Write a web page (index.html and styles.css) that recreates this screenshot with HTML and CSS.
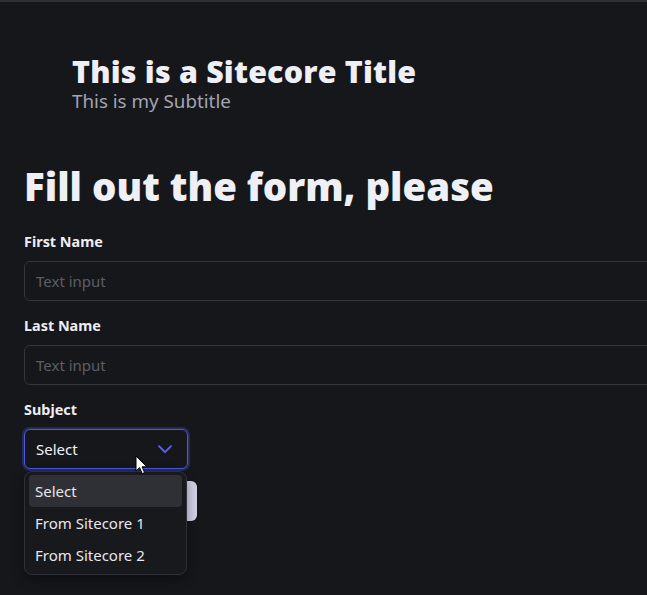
FILE: index.html
```html
<!DOCTYPE html>
<html lang="en">
<head>
<meta charset="utf-8">
<title>Sitecore Form</title>
<link rel="stylesheet" href="styles.css">
</head>
<body>
<div class="page">
  <header class="hero">
    <h1 class="hero-title">This is a Sitecore Title</h1>
    <p class="hero-subtitle">This is my Subtitle</p>
  </header>
  <main class="content">
    <h2 class="form-title">Fill out the form, please</h2>
    <form class="form">
      <div class="field">
        <label class="field-label">First Name</label>
        <div class="text-input"><span class="placeholder">Text input</span></div>
      </div>
      <div class="field">
        <label class="field-label">Last Name</label>
        <div class="text-input"><span class="placeholder">Text input</span></div>
      </div>
      <div class="field">
        <label class="field-label">Subject</label>
        <div class="select-wrap">
          <div class="select">
            <span class="select-value">Select</span>
            <svg class="chevron" width="14" height="9" viewBox="0 0 14 9"><path d="M1 1.2 L7 7.2 L13 1.2" fill="none" stroke="#5b63f0" stroke-width="1.9" stroke-linecap="round" stroke-linejoin="round"/></svg>
          </div>
          <ul class="menu">
            <li class="menu-item active">Select</li>
            <li class="menu-item">From Sitecore 1</li>
            <li class="menu-item">From Sitecore 2</li>
          </ul>
          <svg class="cursor" width="13" height="20" viewBox="0 0 13 20"><path d="M1 1 L1 16 L4.6 12.6 L7.2 18.6 L9.6 17.6 L7 11.8 L11.8 11.8 Z" fill="#ffffff" stroke="#000000" stroke-width="1" stroke-linejoin="miter"/></svg>
        </div>
      </div>
      <div class="actions">
        <button type="button" class="submit">Submit</button>
      </div>
    </form>
  </main>
</div>
</body>
</html>
```
FILE: styles.css
```css
html, body {
  margin: 0;
  padding: 0;
  overflow: hidden;
}
body {
  background: #16171b;
  color: #eceef3;
  font-family: "Noto Sans", "Open Sans", sans-serif;
  height: 595px;
}
.page {
  border-top: 2px solid #2f2f37;
}
.hero {
  padding: 52px 0 0 72px;
}
.hero-title {
  margin: 0;
  font-family: "Open Sans", "Noto Sans", sans-serif;
  font-size: 30.4px;
  line-height: 36px;
  font-weight: 800;
  color: #eef0f6;
  letter-spacing: 0.2px;
}
.hero-subtitle {
  margin: 0;
  font-size: 18.8px;
  line-height: 22px;
  color: #a2a5b1;
}
.content {
  padding: 0 0 0 24px;
}
.form-title {
  margin: 50px 0 0 0;
  font-family: "Open Sans", "Noto Sans", sans-serif;
  font-size: 38.4px;
  line-height: 48px;
  font-weight: 800;
  color: #eef0f6;
}
.form {
  width: 700px;
  margin-top: 24px;
}
.field {
  display: flex;
  flex-direction: column;
  gap: 11px;
  margin-bottom: 17px;
}
.field-label {
  font-size: 14.4px;
  line-height: 16px;
  font-weight: 700;
  color: #eceef3;
}
.text-input {
  height: 38px;
  border: 1px solid #34353d;
  border-radius: 6px;
  display: flex;
  align-items: center;
  padding: 0 11px;
}
.placeholder {
  font-size: 15px;
  color: #5c5e66;
}
.select-wrap {
  position: relative;
  width: 164px;
}
.select {
  height: 38px;
  border: 1px solid #5058de;
  border-radius: 6px;
  box-shadow: 0 0 0 2px #262a5a;
  display: flex;
  align-items: center;
  justify-content: space-between;
  padding: 0 15px 0 11px;
}
.select-value {
  font-size: 15px;
  color: #f0f1f5;
}
.chevron {
  display: block;
}
.menu {
  position: absolute;
  left: 0;
  top: 42px;
  width: 163px;
  margin: 0;
  padding: 3px 4px;
  list-style: none;
  background: #18191d;
  border: 1px solid #303138;
  border-radius: 8px;
  box-sizing: border-box;
  z-index: 2;
  box-shadow: 0 4px 12px rgba(0,0,0,0.4);
}
.menu-item {
  height: 32px;
  line-height: 32px;
  padding: 0 6px;
  font-size: 15px;
  color: #e6e7ec;
  border-radius: 4px;
}
.menu-item.active {
  background: #2f3035;
}
.cursor {
  position: absolute;
  left: 111px;
  top: 26px;
  z-index: 3;
}
.actions {
  margin-top: -5px;
}
.submit {
  width: 173px;
  height: 40px;
  border: none;
  border-left: 1px solid #4a52c8;
  border-radius: 6px;
  background: linear-gradient(90deg, #ffffff, #d2d2e6);
  font-family: inherit;
  font-size: 15px;
  color: #16171b;
}
```
